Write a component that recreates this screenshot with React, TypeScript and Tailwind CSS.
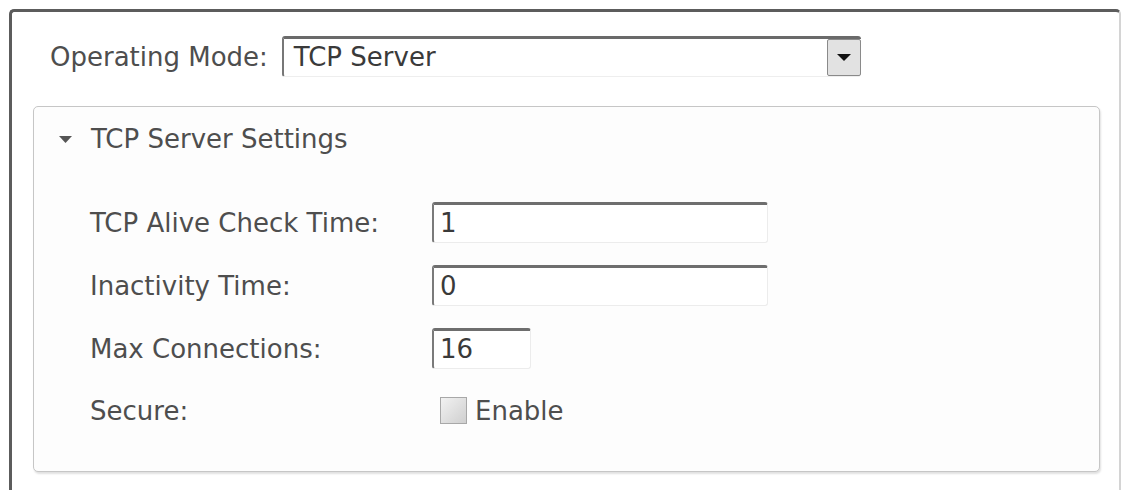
import React from "react";

const font = { fontFamily: '"DejaVu Sans", Verdana, sans-serif' };

function TextBox({ value, width }: { value: string; width: string }) {
  return (
    <div
      className={`${width} h-[41px] flex items-center pl-[6px] bg-white rounded-[3px] border-t-[3px] border-l-[2px] border-t-[#6e6e6e] border-l-[#7a7a7a] border-r border-b border-r-[#ececec] border-b-[#ececec] text-[26px] text-[#3a3a3a]`}
    >
      {value}
    </div>
  );
}

function Row({ label, children }: { label: string; children: React.ReactNode }) {
  return (
    <div className="flex items-center h-[41px]">
      <div className="w-[342px] text-[26px] text-[#4e4e4e] leading-none">{label}</div>
      {children}
    </div>
  );
}

export default function App() {
  return (
    <div className="w-[1126px] h-[490px] bg-white overflow-hidden" style={font}>
      <div className="ml-[9px] mt-[9px] w-[1112px] h-[520px] rounded-t-[5px] border-t-[3px] border-l-[3px] border-t-[#5c5c5c] border-l-[#5c5c5c] border-r-2 border-r-[#d4d4d4]">
        {/* operating mode selector */}
        <div className="flex items-center mt-[24px] pl-[38px] gap-[14px]">
          <span className="text-[26px] text-[#4e4e4e] leading-none">Operating Mode:</span>
          <div className="w-[579px] h-[41px] flex items-stretch rounded-[3px] border-t-[3px] border-l-[2px] border-t-[#6a6a6a] border-l-[#777] border-b border-b-[#eeeeee]">
            <div className="flex-1 flex items-center pl-[10px] text-[26px] text-[#3a3a3a]">TCP Server</div>
            <div className="w-[34px] flex items-center justify-center bg-[#e2e2e2] border border-[#8a8a8a] rounded-[2px]">
              <svg width="14" height="7" viewBox="0 0 14 7">
                <polygon points="0,0 14,0 7,7" fill="#111" />
              </svg>
            </div>
          </div>
        </div>

        {/* settings group */}
        <div className="ml-[21px] mt-[29px] w-[1067px] h-[366px] bg-[#fdfdfd] border border-[#c6c6c6] rounded-[5px] shadow-[1px_2px_2px_rgba(0,0,0,0.12)]">
          <div className="flex items-center pt-[17px] pl-[25px] h-[47px]">
            <svg width="13" height="7" viewBox="0 0 13 7" className="mr-[19px]">
              <polygon points="0,0 13,0 6.5,7" fill="#555" />
            </svg>
            <span className="text-[26px] text-[#4e4e4e] leading-none">TCP Server Settings</span>
          </div>

          <div className="mt-[48px] pl-[56px] flex flex-col gap-[22px]">
            <Row label="TCP Alive Check Time:">
              <TextBox value="1" width="w-[336px]" />
            </Row>
            <Row label="Inactivity Time:">
              <TextBox value="0" width="w-[336px]" />
            </Row>
            <Row label="Max Connections:">
              <TextBox value="16" width="w-[99px]" />
            </Row>
            <div className="flex items-center h-[27px] mt-[6px]">
              <div className="w-[342px] text-[26px] text-[#4e4e4e] leading-none">Secure:</div>
              <div className="ml-[8px] w-[27px] h-[27px] border border-[#a8a8a8] bg-gradient-to-br from-[#f2f2f2] to-[#cfcfcf]" />
              <span className="ml-[8px] text-[26px] text-[#4e4e4e] leading-none">Enable</span>
            </div>
          </div>
        </div>
      </div>
    </div>
  );
}
